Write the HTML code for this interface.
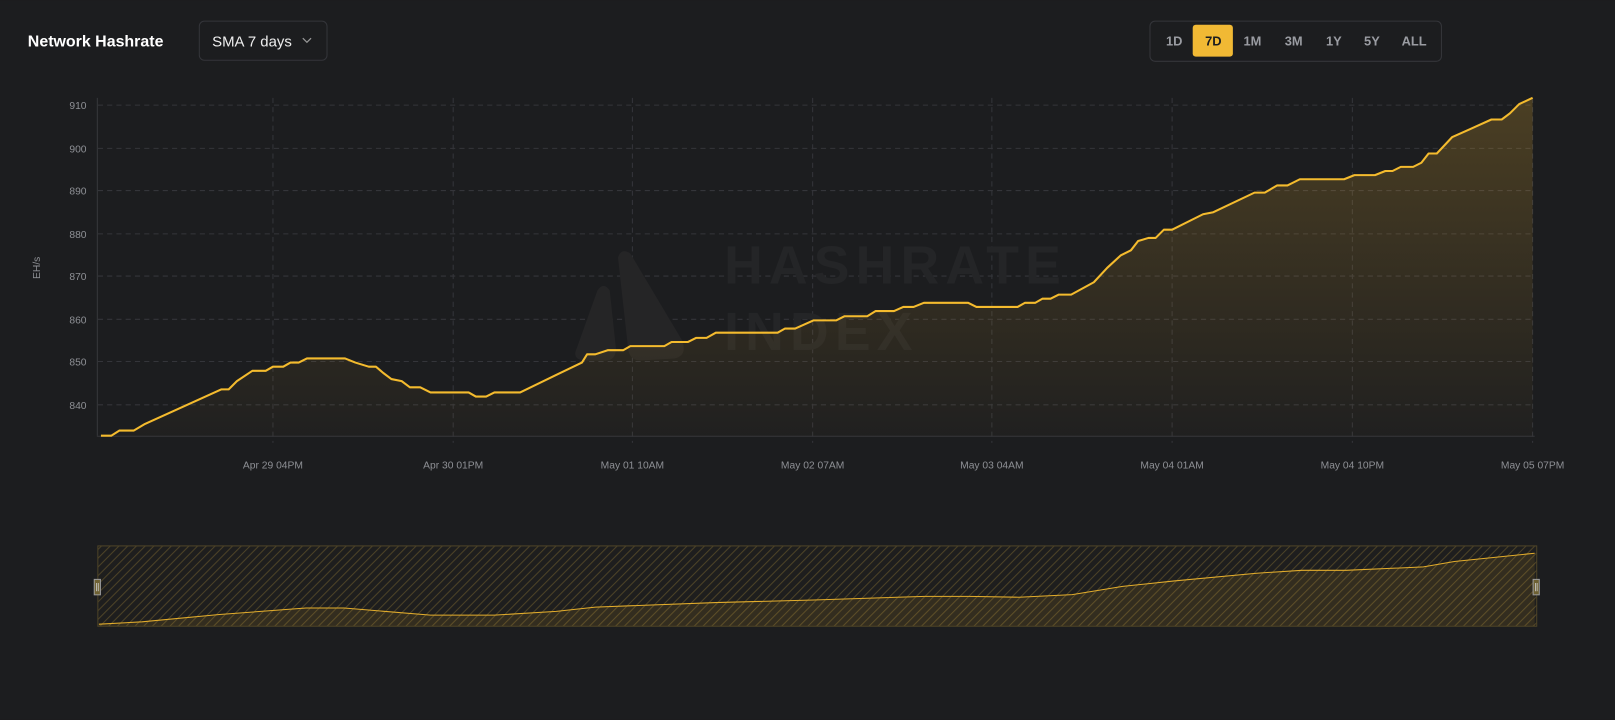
<!DOCTYPE html>
<html><head><meta charset="utf-8"><style>
html,body{margin:0;padding:0;background:#1c1d1f;overflow:hidden}
svg{display:block}
text{font-family:"Liberation Sans",sans-serif}
</style></head><body>
<svg width="1615" height="720" viewBox="0 0 1568 699" xmlns="http://www.w3.org/2000/svg">
<defs>
<linearGradient id="g" x1="0" y1="0" x2="0" y2="1">
<stop offset="0" stop-color="#f2b632" stop-opacity="0.22"/>
<stop offset="1" stop-color="#f2b632" stop-opacity="0.02"/>
</linearGradient>
<pattern id="h" width="6" height="6" patternUnits="userSpaceOnUse" patternTransform="rotate(45)">
<rect width="6" height="6" fill="#1e1e1e"/>
<line x1="0" y1="0" x2="0" y2="6" stroke="#4d4327" stroke-width="2"/>
</pattern>
</defs>
<rect width="1568" height="699" fill="#1c1d1f"/>
<text x="27" y="45" fill="#fff" font-size="15.5" font-weight="bold">Network Hashrate</text>
<rect x="193.5" y="20.5" width="124" height="38" rx="5" fill="#1c1d1f" stroke="#34353a"/>
<text x="206" y="45" fill="#eee" font-size="14.5">SMA 7 days</text>
<path d="M294 37 l4 4 l4 -4" fill="none" stroke="#999" stroke-width="1.2"/>
<rect x="1116.5" y="20.5" width="283" height="39" rx="5" fill="none" stroke="#34353a"/>
<rect x="1158" y="24" width="39" height="31" rx="3" fill="#f1b934"/>
<g font-size="12.5" font-weight="bold" fill="#9a9ca2" text-anchor="middle">
<text x="1140" y="44">1D</text>
<text x="1178" y="44" fill="#1c1d1f">7D</text>
<text x="1216" y="44">1M</text>
<text x="1256" y="44">3M</text>
<text x="1295" y="44">1Y</text>
<text x="1332" y="44">5Y</text>
<text x="1373" y="44">ALL</text>
</g>
<g stroke="#34353a" stroke-dasharray="5,4" stroke-width="1">
<line x1="95" y1="102" x2="1490" y2="102"/>
<line x1="95" y1="144" x2="1490" y2="144"/>
<line x1="95" y1="185" x2="1490" y2="185"/>
<line x1="95" y1="227" x2="1490" y2="227"/>
<line x1="95" y1="268" x2="1490" y2="268"/>
<line x1="95" y1="310" x2="1490" y2="310"/>
<line x1="95" y1="351" x2="1490" y2="351"/>
<line x1="95" y1="393" x2="1490" y2="393"/>
<line x1="265" y1="95" x2="265" y2="430"/>
<line x1="440" y1="95" x2="440" y2="430"/>
<line x1="614" y1="95" x2="614" y2="430"/>
<line x1="789" y1="95" x2="789" y2="430"/>
<line x1="963" y1="95" x2="963" y2="430"/>
<line x1="1138" y1="95" x2="1138" y2="430"/>
<line x1="1313" y1="95" x2="1313" y2="430"/>
<line x1="1488" y1="95" x2="1488" y2="430"/>
</g>
<line x1="94.5" y1="95" x2="94.5" y2="423" stroke="#36373a"/>
<line x1="94" y1="423.5" x2="1490" y2="423.5" stroke="#36373a"/>
<g font-size="10" fill="#8e9095" text-anchor="end">
<text x="84" y="106">910</text><text x="84" y="148">900</text><text x="84" y="189">890</text><text x="84" y="231">880</text><text x="84" y="272">870</text><text x="84" y="314">860</text><text x="84" y="355">850</text><text x="84" y="397">840</text>
</g>
<text transform="translate(39,260) rotate(-90)" font-size="10" fill="#8e9095" text-anchor="middle">EH/s</text>
<g font-size="10" fill="#8e9095" text-anchor="middle">
<text x="265" y="455">Apr 29 04PM</text><text x="440" y="455">Apr 30 01PM</text><text x="614" y="455">May 01 10AM</text><text x="789" y="455">May 02 07AM</text><text x="963" y="455">May 03 04AM</text><text x="1138" y="455">May 04 01AM</text><text x="1313" y="455">May 04 10PM</text><text x="1488" y="455">May 05 07PM</text>
</g>
<g fill="#252526">
<path d="M600 250 Q603 240 612 246 L662 330 Q668 345 655 348 L622 350 Q612 350 610 340 Z"/>
<path d="M580 282 Q586 273 592 282 L598 338 Q598 350 588 350 L566 350 Q555 348 560 338 Z"/>
</g>
<text x="703" y="275" font-size="52" font-weight="bold" fill="#242527" letter-spacing="6">HASHRATE</text>
<text x="703" y="340" font-size="52" font-weight="bold" fill="#242527" letter-spacing="6">INDEX</text>
<polygon fill="url(#g)" points="98,423 108,423 116,418 130,418 140,412 215,378 222,378 230,370 245,360 258,360 265,356 275,356 282,352 290,352 298,348 335,348 345,352 358,356 365,356 372,362 380,368 390,370 398,376 408,376 418,381 455,381 462,385 472,385 480,381 505,381 540,364 565,352 570,344 578,344 590,340 605,340 612,336 645,336 652,332 668,332 676,328 686,328 695,323 755,323 762,319 772,319 790,311 812,311 820,307 842,307 850,302 868,302 877,298 887,298 897,294 940,294 948,298 988,298 995,294 1005,294 1012,290 1020,290 1028,286 1040,286 1062,274 1075,260 1088,248 1098,243 1105,234 1115,231 1122,231 1130,223 1138,223 1168,208 1178,206 1218,187 1228,187 1240,180 1250,180 1262,174 1305,174 1315,170 1335,170 1345,166 1352,166 1360,162 1372,162 1380,158 1387,149 1395,149 1410,133 1428,125 1448,116 1458,116 1466,110 1475,101 1488,95 1488,423"/>
<polyline fill="none" stroke="#f4bb2e" stroke-width="2" stroke-linejoin="round" points="98,423 108,423 116,418 130,418 140,412 215,378 222,378 230,370 245,360 258,360 265,356 275,356 282,352 290,352 298,348 335,348 345,352 358,356 365,356 372,362 380,368 390,370 398,376 408,376 418,381 455,381 462,385 472,385 480,381 505,381 540,364 565,352 570,344 578,344 590,340 605,340 612,336 645,336 652,332 668,332 676,328 686,328 695,323 755,323 762,319 772,319 790,311 812,311 820,307 842,307 850,302 868,302 877,298 887,298 897,294 940,294 948,298 988,298 995,294 1005,294 1012,290 1020,290 1028,286 1040,286 1062,274 1075,260 1088,248 1098,243 1105,234 1115,231 1122,231 1130,223 1138,223 1168,208 1178,206 1218,187 1228,187 1240,180 1250,180 1262,174 1305,174 1315,170 1335,170 1345,166 1352,166 1360,162 1372,162 1380,158 1387,149 1395,149 1410,133 1428,125 1448,116 1458,116 1466,110 1475,101 1488,95"/>
<rect x="95" y="530" width="1397" height="78" fill="url(#h)"/>
<polygon fill="#f2b632" fill-opacity="0.1" points="96,606 138,603.7 213,596.6 297,590.3 334,590.3 418,597.2 480,597.2 540,593.6 578,589.4 695,585 790,582.5 898,579 941,579 989,579.8 1041,577.3 1090,569.3 1140,564 1220,556.5 1264,553.7 1307,553.7 1382,550.4 1412,545.1 1490,537.1 1490,608 96,608"/>
<polyline fill="none" stroke="#e3ad2c" stroke-width="1" points="96,606 138,603.7 213,596.6 297,590.3 334,590.3 418,597.2 480,597.2 540,593.6 578,589.4 695,585 790,582.5 898,579 941,579 989,579.8 1041,577.3 1090,569.3 1140,564 1220,556.5 1264,553.7 1307,553.7 1382,550.4 1412,545.1 1490,537.1"/>
<rect x="95" y="530" width="1397" height="78" fill="none" stroke="#4d4327"/>
<rect x="91.5" y="562.5" width="6" height="15" fill="#6e6133" stroke="#9a9a9a"/>
<rect x="1488.5" y="562.5" width="6" height="15" fill="#6e6133" stroke="#9a9a9a"/>
<g stroke="#ccc" stroke-width="0.8"><line x1="93.8" y1="566" x2="93.8" y2="574"/><line x1="95.4" y1="566" x2="95.4" y2="574"/><line x1="1490.8" y1="566" x2="1490.8" y2="574"/><line x1="1492.4" y1="566" x2="1492.4" y2="574"/></g>
</svg>
</body></html>
